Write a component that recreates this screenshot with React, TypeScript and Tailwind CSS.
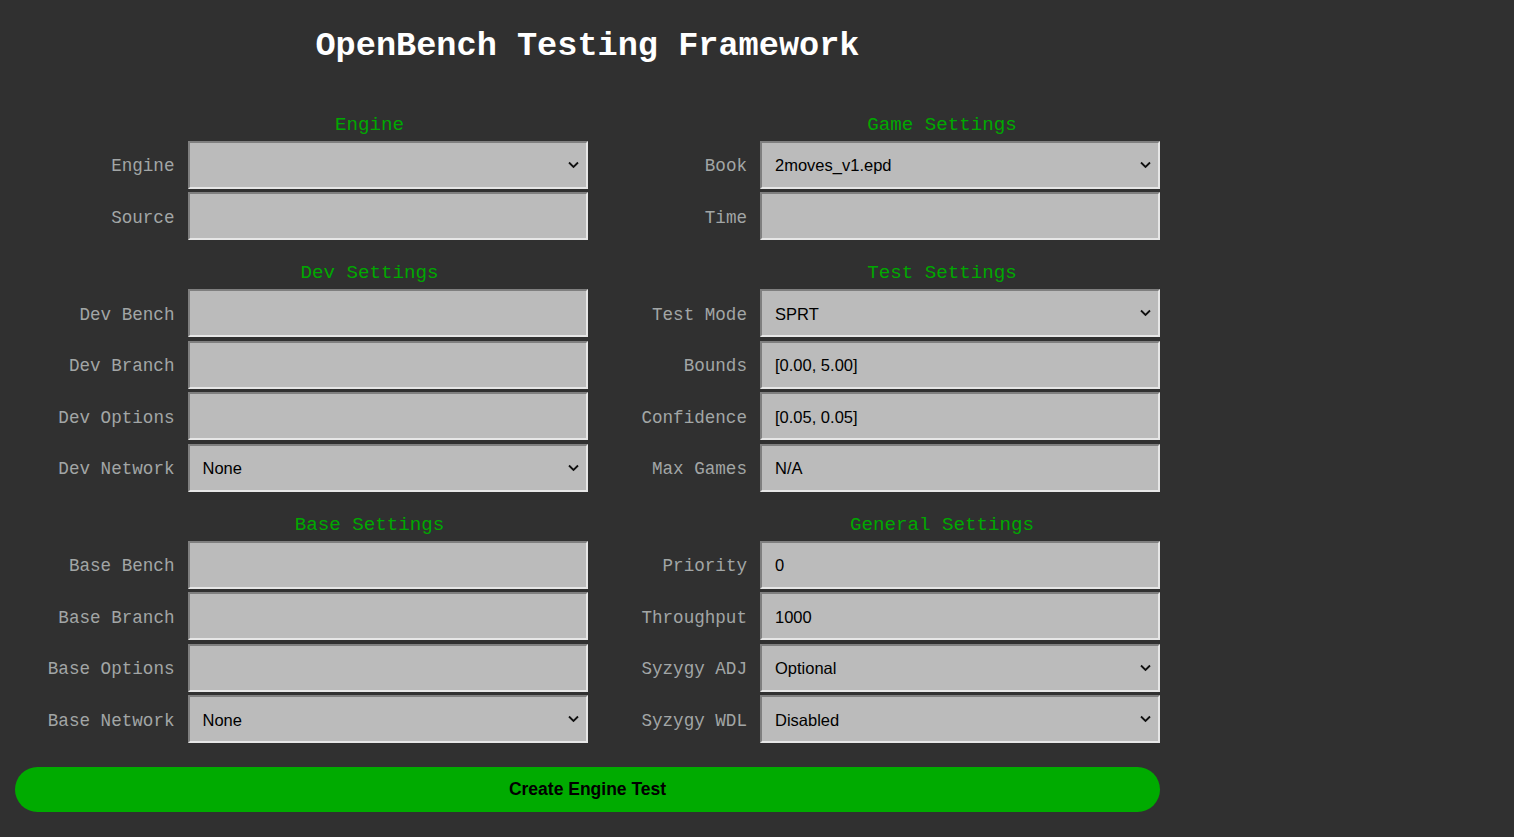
import type { ReactNode } from 'react';

type Field = {
  label: string;
  value?: string;
  select?: boolean;
};

type Section = {
  title: string;
  fields: Field[];
};

const rows: [Section, Section][] = [
  [
    { title: 'Engine', fields: [{ label: 'Engine', select: true, value: '' }, { label: 'Source' }] },
    { title: 'Game Settings', fields: [{ label: 'Book', select: true, value: '2moves_v1.epd' }, { label: 'Time' }] },
  ],
  [
    {
      title: 'Dev Settings',
      fields: [
        { label: 'Dev Bench' },
        { label: 'Dev Branch' },
        { label: 'Dev Options' },
        { label: 'Dev Network', select: true, value: 'None' },
      ],
    },
    {
      title: 'Test Settings',
      fields: [
        { label: 'Test Mode', select: true, value: 'SPRT' },
        { label: 'Bounds', value: '[0.00, 5.00]' },
        { label: 'Confidence', value: '[0.05, 0.05]' },
        { label: 'Max Games', value: 'N/A' },
      ],
    },
  ],
  [
    {
      title: 'Base Settings',
      fields: [
        { label: 'Base Bench' },
        { label: 'Base Branch' },
        { label: 'Base Options' },
        { label: 'Base Network', select: true, value: 'None' },
      ],
    },
    {
      title: 'General Settings',
      fields: [
        { label: 'Priority', value: '0' },
        { label: 'Throughput', value: '1000' },
        { label: 'Syzygy ADJ', select: true, value: 'Optional' },
        { label: 'Syzygy WDL', select: true, value: 'Disabled' },
      ],
    },
  ],
];

const boxClass =
  'w-full h-full bg-[#bbbbbb] border-2 border-solid border-t-[#7f7f7f] border-l-[#7f7f7f] border-b-[#e6e6e6] border-r-[#e6e6e6] pl-[13px] pr-8 pt-[2px] text-[16.5px] text-black outline-none appearance-none font-["Liberation_Sans",Arial,sans-serif]';

const Chevron = () => (
  <svg
    className="pointer-events-none absolute right-[9px] top-1/2 -translate-y-1/2"
    width="11"
    height="7"
    viewBox="0 0 11 7"
    fill="none"
  >
    <path d="M1 1l4.5 4.5L10 1" stroke="#111" strokeWidth="1.8" />
  </svg>
);

const FieldRow = ({ field }: { field: Field }) => {
  let control: ReactNode;
  if (field.select) {
    control = (
      <div className="relative w-full h-full">
        <select className={boxClass} defaultValue={field.value}>
          <option value={field.value}>{field.value}</option>
        </select>
        <Chevron />
      </div>
    );
  } else {
    control = <input className={boxClass} defaultValue={field.value ?? ''} />;
  }

  return (
    <div className="flex items-center h-[48px]">
      <label className="flex-1 text-right pr-[13px] pt-[4px] text-[17.6px] text-[#a2a6a6] whitespace-pre">
        {field.label}
      </label>
      <div className="w-[400px] h-full">{control}</div>
    </div>
  );
};

const SectionBlock = ({ section }: { section: Section }) => (
  <div className="flex flex-col">
    <div className="ml-auto w-[436px] h-[35px] flex items-center justify-center pt-[4px] text-[19.2px] text-[#00a800]">
      {section.title}
    </div>
    <div className="flex flex-col gap-[3.5px]">
      {section.fields.map(f => (
        <FieldRow key={f.label} field={f} />
      ))}
    </div>
  </div>
);

export default function App() {
  return (
    <div className="min-h-[837px] bg-[#303030] font-['Liberation_Mono','Courier_New',monospace]">
      <div className="w-[1145px] ml-[15px]">
        <div className="h-[88px] flex items-center justify-center pt-[4px] text-[33.6px] font-bold text-white">
          OpenBench Testing Framework
        </div>
        <div className="mt-[17.5px] flex flex-col gap-[14px]">
          {rows.map(([left, right]) => (
            <div key={left.title} className="grid grid-cols-2">
              <SectionBlock section={left} />
              <SectionBlock section={right} />
            </div>
          ))}
        </div>
        <button className="mt-[24px] w-full h-[45px] rounded-[23px] bg-[#00ab00] text-black font-bold text-[17.5px] font-['Liberation_Sans',Arial,sans-serif]">
          Create Engine Test
        </button>
      </div>
    </div>
  );
}
